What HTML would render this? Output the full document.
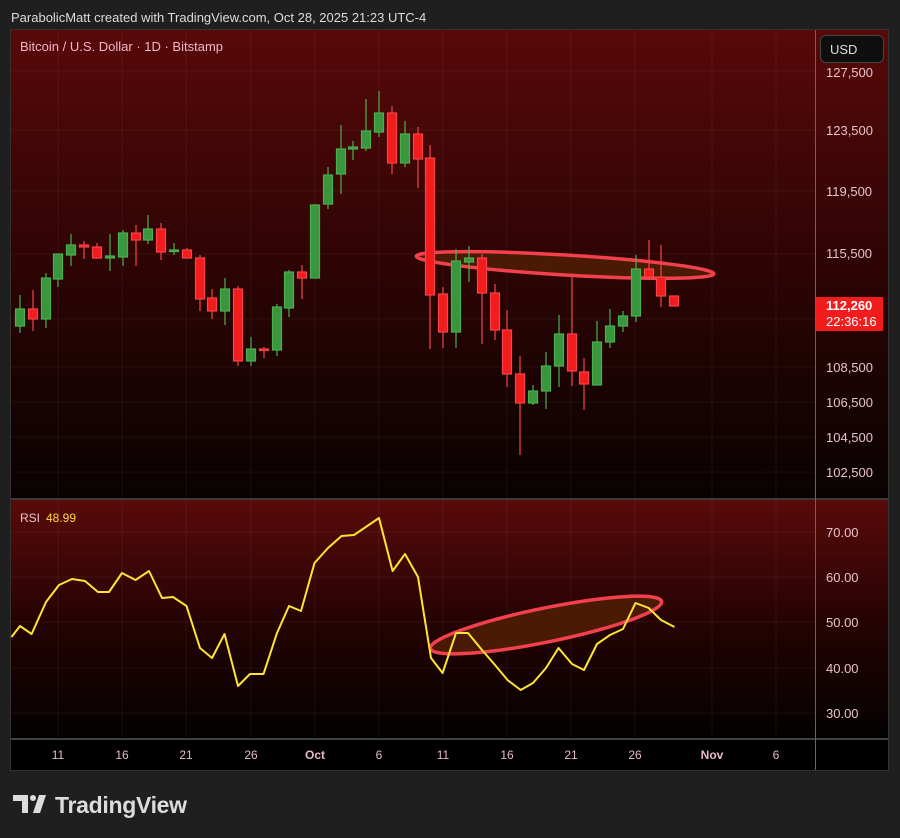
<!DOCTYPE html>
<html><head><meta charset="utf-8"><style>
html,body{margin:0;padding:0;background:#1f1f1f;width:900px;height:838px;overflow:hidden;font-family:"Liberation Sans",sans-serif}
</style></head><body>
<svg width="900" height="838" viewBox="0 0 900 838" xmlns="http://www.w3.org/2000/svg" style="position:absolute;left:0;top:0">
<defs>
<linearGradient id="gm" x1="0" y1="0" x2="0" y2="1">
<stop offset="0" stop-color="#580909"/><stop offset="0.5" stop-color="#2e0404"/><stop offset="1" stop-color="#090202"/></linearGradient>
<linearGradient id="gr" x1="0" y1="0" x2="0" y2="1">
<stop offset="0" stop-color="#5a0a0a"/><stop offset="0.5" stop-color="#260303"/><stop offset="1" stop-color="#030101"/></linearGradient>
</defs>
<rect width="900" height="838" fill="#1f1f1f"/>
<text x="11" y="22" font-size="13" fill="#dcdcdc">ParabolicMatt created with TradingView.com, Oct 28, 2025 21:23 UTC-4</text>
<rect x="10.5" y="29.5" width="878" height="741" fill="#000" stroke="#333"/>
<rect x="11" y="30" width="877" height="468" fill="url(#gm)"/>
<rect x="11" y="500" width="877" height="238" fill="url(#gr)"/>
<rect x="11" y="740" width="877" height="30" fill="#000"/>
<g stroke="#ffffff" stroke-opacity="0.05" stroke-width="1">
<line x1="11" y1="71" x2="815" y2="71"/><line x1="11" y1="130" x2="815" y2="130"/><line x1="11" y1="191" x2="815" y2="191"/><line x1="11" y1="254" x2="815" y2="254"/><line x1="11" y1="319" x2="815" y2="319"/><line x1="11" y1="367" x2="815" y2="367"/><line x1="11" y1="402" x2="815" y2="402"/><line x1="11" y1="437" x2="815" y2="437"/><line x1="11" y1="472" x2="815" y2="472"/>
<line x1="11" y1="532" x2="815" y2="532"/><line x1="11" y1="577" x2="815" y2="577"/><line x1="11" y1="622" x2="815" y2="622"/><line x1="11" y1="668" x2="815" y2="668"/><line x1="11" y1="713" x2="815" y2="713"/>
<line x1="58" y1="30" x2="58" y2="738"/><line x1="122" y1="30" x2="122" y2="738"/><line x1="186" y1="30" x2="186" y2="738"/><line x1="251" y1="30" x2="251" y2="738"/><line x1="315" y1="30" x2="315" y2="738"/><line x1="379" y1="30" x2="379" y2="738"/><line x1="443" y1="30" x2="443" y2="738"/><line x1="507" y1="30" x2="507" y2="738"/><line x1="571" y1="30" x2="571" y2="738"/><line x1="635" y1="30" x2="635" y2="738"/><line x1="712" y1="30" x2="712" y2="738"/><line x1="776" y1="30" x2="776" y2="738"/>
</g>
<line x1="11" y1="499" x2="888" y2="499" stroke="#3a3a3a" stroke-width="2"/>
<line x1="11" y1="739" x2="888" y2="739" stroke="#555" stroke-width="1.5"/>
<line x1="815.5" y1="30" x2="815.5" y2="770" stroke="#666" stroke-width="1"/>
<text x="20" y="51" font-size="13" fill="#f2b6c6">Bitcoin / U.S. Dollar · 1D · Bitstamp</text>
<ellipse cx="565" cy="265" rx="149" ry="10" transform="rotate(3.4 565 265)" fill="#4a1a05" stroke="#f2404c" stroke-width="3.5"/>
<g stroke-width="1.2">
<g stroke="#4caf50" fill="#3a963e">
<line x1="20" y1="295" x2="20" y2="333"/><rect x="15.5" y="309" width="9" height="17"/>
<line x1="46" y1="273" x2="46" y2="328"/><rect x="41.5" y="278" width="9" height="41"/>
<line x1="58" y1="254" x2="58" y2="287"/><rect x="53.5" y="254" width="9" height="25"/>
<line x1="71" y1="234" x2="71" y2="266"/><rect x="66.5" y="245" width="9" height="10"/>
<line x1="110" y1="234" x2="110" y2="271"/><rect x="105.5" y="256" width="9" height="2"/>
<line x1="123" y1="230" x2="123" y2="266"/><rect x="118.5" y="233" width="9" height="24"/>
<line x1="148" y1="215" x2="148" y2="244"/><rect x="143.5" y="229" width="9" height="11"/>
<line x1="174" y1="243" x2="174" y2="255"/><rect x="169.5" y="250" width="9" height="1.5"/>
<line x1="225" y1="278" x2="225" y2="325"/><rect x="220.5" y="289" width="9" height="22"/>
<line x1="251" y1="337" x2="251" y2="366"/><rect x="246.5" y="349" width="9" height="12"/>
<line x1="277" y1="304" x2="277" y2="356"/><rect x="272.5" y="307" width="9" height="43"/>
<line x1="289" y1="270" x2="289" y2="317"/><rect x="284.5" y="272" width="9" height="36"/>
<line x1="315" y1="204" x2="315" y2="278"/><rect x="310.5" y="205" width="9" height="73"/>
<line x1="328" y1="167" x2="328" y2="209"/><rect x="323.5" y="175" width="9" height="29"/>
<line x1="341" y1="125" x2="341" y2="194"/><rect x="336.5" y="149" width="9" height="25"/>
<line x1="353" y1="141" x2="353" y2="160"/><rect x="348.5" y="147" width="9" height="2"/>
<line x1="366" y1="99" x2="366" y2="151"/><rect x="361.5" y="131" width="9" height="17"/>
<line x1="379" y1="91" x2="379" y2="137"/><rect x="374.5" y="113" width="9" height="19"/>
<line x1="405" y1="121" x2="405" y2="167"/><rect x="400.5" y="134" width="9" height="29"/>
<line x1="456" y1="249" x2="456" y2="348"/><rect x="451.5" y="261" width="9" height="71"/>
<line x1="469" y1="246" x2="469" y2="282"/><rect x="464.5" y="258" width="9" height="4"/>
<line x1="533" y1="385" x2="533" y2="405"/><rect x="528.5" y="391" width="9" height="12"/>
<line x1="546" y1="352" x2="546" y2="409"/><rect x="541.5" y="366" width="9" height="25"/>
<line x1="559" y1="315" x2="559" y2="387"/><rect x="554.5" y="334" width="9" height="32"/>
<line x1="597" y1="321" x2="597" y2="385"/><rect x="592.5" y="342" width="9" height="43"/>
<line x1="610" y1="309" x2="610" y2="348"/><rect x="605.5" y="326" width="9" height="16"/>
<line x1="623" y1="311" x2="623" y2="332"/><rect x="618.5" y="316" width="9" height="10"/>
<line x1="636" y1="255" x2="636" y2="322"/><rect x="631.5" y="269" width="9" height="47"/>
</g>
<g stroke="#f5444a" fill="#f21c1c">
<line x1="33" y1="290" x2="33" y2="331"/><rect x="28.5" y="309" width="9" height="10"/>
<line x1="84" y1="241" x2="84" y2="259"/><rect x="79.5" y="245" width="9" height="2"/>
<line x1="97" y1="243" x2="97" y2="259"/><rect x="92.5" y="247" width="9" height="11"/>
<line x1="136" y1="225" x2="136" y2="266"/><rect x="131.5" y="233" width="9" height="7"/>
<line x1="161" y1="223" x2="161" y2="260"/><rect x="156.5" y="229" width="9" height="23"/>
<line x1="187" y1="248" x2="187" y2="258"/><rect x="182.5" y="250" width="9" height="8"/>
<line x1="200" y1="255" x2="200" y2="311"/><rect x="195.5" y="258" width="9" height="41"/>
<line x1="212" y1="289" x2="212" y2="319"/><rect x="207.5" y="298" width="9" height="13"/>
<line x1="238" y1="286" x2="238" y2="366"/><rect x="233.5" y="289" width="9" height="72"/>
<line x1="264" y1="347" x2="264" y2="358"/><rect x="259.5" y="349" width="9" height="1.5"/>
<line x1="302" y1="265" x2="302" y2="299"/><rect x="297.5" y="272" width="9" height="6"/>
<line x1="392" y1="106" x2="392" y2="174"/><rect x="387.5" y="113" width="9" height="50"/>
<line x1="418" y1="127" x2="418" y2="188"/><rect x="413.5" y="134" width="9" height="25"/>
<line x1="430" y1="145" x2="430" y2="349"/><rect x="425.5" y="158" width="9" height="137"/>
<line x1="443" y1="287" x2="443" y2="348"/><rect x="438.5" y="294" width="9" height="38"/>
<line x1="482" y1="254" x2="482" y2="344"/><rect x="477.5" y="258" width="9" height="35"/>
<line x1="495" y1="284" x2="495" y2="340"/><rect x="490.5" y="293" width="9" height="37"/>
<line x1="507" y1="310" x2="507" y2="387"/><rect x="502.5" y="330" width="9" height="44"/>
<line x1="520" y1="356" x2="520" y2="455"/><rect x="515.5" y="374" width="9" height="29"/>
<line x1="572" y1="277" x2="572" y2="386"/><rect x="567.5" y="334" width="9" height="37"/>
<line x1="584" y1="358" x2="584" y2="410"/><rect x="579.5" y="372" width="9" height="12"/>
<line x1="649" y1="240" x2="649" y2="278"/><rect x="644.5" y="269" width="9" height="8"/>
<line x1="661" y1="245" x2="661" y2="307"/><rect x="656.5" y="277" width="9" height="19"/>
<rect x="669.5" y="296" width="9" height="10"/>
</g>
</g>
<g font-size="13" fill="#e8c2cc">
<text x="826" y="77">127,500</text><text x="826" y="135">123,500</text><text x="826" y="196">119,500</text><text x="826" y="258">115,500</text>
<text x="826" y="372">108,500</text><text x="826" y="407">106,500</text><text x="826" y="442">104,500</text><text x="826" y="477">102,500</text>
<text x="826" y="537">70.00</text><text x="826" y="582">60.00</text><text x="826" y="627">50.00</text><text x="826" y="673">40.00</text><text x="826" y="718">30.00</text>
</g>
<rect x="820.5" y="35.5" width="63" height="27" rx="5" fill="#0f0f0f" stroke="#444"/>
<text x="830" y="54" font-size="13" fill="#ddd">USD</text>
<rect x="816" y="297" width="67" height="34" rx="1" fill="#f21c1c"/>
<text x="826" y="310" font-size="13" fill="#fff" font-weight="bold">112,260</text>
<text x="826" y="326" font-size="13" fill="#fff">22:36:16</text>
<text x="20" y="522" font-size="12" fill="#e8c2cc">RSI</text>
<text x="46" y="522" font-size="12" fill="#ffd83a">48.99</text>
<ellipse cx="546" cy="625" rx="118" ry="17" transform="rotate(-11.5 546 625)" fill="#4a1a05" stroke="#f2404c" stroke-width="3.5"/>
<polyline fill="none" stroke="#ffe433" stroke-width="2" stroke-linejoin="round" points="11.5,637 20,626 31.6,634 46,602 59,585 72,579 85,581 98,592 109,592 122,573 135.5,580 149,571 162,598 173,597 186.5,606 200,648 212,658 224.5,634 238,686 250,674 263.5,674 277,633 289,606 301,611 314.5,563 328,548 341.5,536 354,535 379,518 392.6,571 405,554 418,577 431,658 442.6,673 456,633 468,633 482,650 495,665 507.5,680 520.7,690 533,683 546,668 558.5,648 572,664 584,670 597,644 610,635 623,629 635.5,603 648.7,608 661,620 674.5,627"/>
<g font-size="12" fill="#e8b8cc" text-anchor="middle">
<text x="58" y="759">11</text><text x="122" y="759">16</text><text x="186" y="759">21</text><text x="251" y="759">26</text><text x="315" y="759" font-weight="bold">Oct</text><text x="379" y="759">6</text><text x="443" y="759">11</text><text x="507" y="759">16</text><text x="571" y="759">21</text><text x="635" y="759">26</text><text x="712" y="759" font-weight="bold">Nov</text><text x="776" y="759">6</text>
</g>
<g fill="#dcdcdc">
<path d="M13 795 H28 V813 H22 V801 H13 Z"/>
<circle cx="33" cy="798" r="3"/>
<path d="M39 795 H46 L40 813 H33 Z"/>
</g>
<text x="55" y="813" font-size="23" font-weight="bold" fill="#dcdcdc" letter-spacing="-0.3">TradingView</text>
</svg>
</body></html>
